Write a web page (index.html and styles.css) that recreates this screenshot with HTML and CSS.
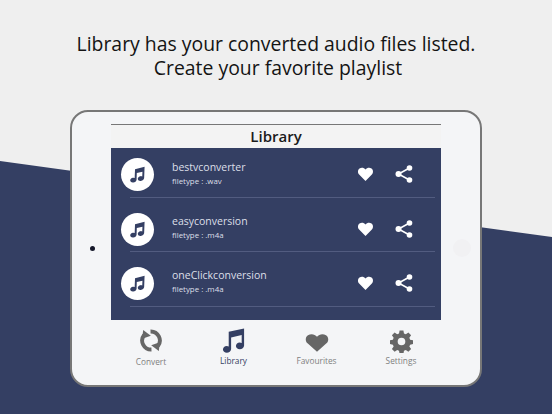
FILE: index.html
```html
<!DOCTYPE html>
<html lang="en">
<head>
<meta charset="utf-8">
<title>Library</title>
<link rel="stylesheet" href="styles.css">
</head>
<body>
<svg width="0" height="0" class="defs" aria-hidden="true">
  <symbol id="note" viewBox="0 0 24 24"><path d="M22 1 8.500 4.500 8 17a4 4 0 0 0-2.400-.5C3.300 16.700 1.500 18.500 1.700 20.500S3.900 23.500 6.100 23.200 10.500 21.500 10.700 19.300L11 10l8-2-.3 6.800a4 4 0 0 0-2.400-.5c-2.300.2-4.100 2-3.900 4s2.200 3 4.400 2.700 4.400-1.800 4.600-4z"/></symbol>
  <symbol id="heart" viewBox="0 0 24 24"><path d="M12 22.500 2.800 13.200C-.2 10.200.300 5.800 3 3.700c2.800-2.100 6.800-1.500 9 1.600 2.200-3.100 6.200-3.700 9-1.600 2.700 2.100 3.200 6.500.2 9.500z"/></symbol>
  <symbol id="share" viewBox="0 0 18 18"><path class="share-line" d="M14.500 3 3.500 9l11 6"/><circle cx="14.500" cy="3" r="2.800"/><circle cx="3.500" cy="9" r="3"/><circle cx="14.500" cy="15" r="2.800"/></symbol>
</svg>
<main class="page">
  <h1 class="headline">Library has your converted audio files listed.<br><span class="headline-second">Create your favorite playlist</span></h1>
  <section class="tablet">
    <span class="camera"></span>
    <span class="home"></span>
    <div class="screen">
      <h2 class="title">Library</h2>
      <ul class="list">
        <li class="row">
          <span class="disc"><svg class="disc-icon"><use href="#note"/></svg></span>
          <div class="meta"><span class="name">bestvconverter</span><span class="type">filetype : .wav</span></div>
          <svg class="like"><use href="#heart"/></svg>
          <svg class="share"><use href="#share"/></svg>
        </li>
        <li class="row">
          <span class="disc"><svg class="disc-icon"><use href="#note"/></svg></span>
          <div class="meta"><span class="name">easyconversion</span><span class="type">filetype : .m4a</span></div>
          <svg class="like"><use href="#heart"/></svg>
          <svg class="share"><use href="#share"/></svg>
        </li>
        <li class="row">
          <span class="disc"><svg class="disc-icon"><use href="#note"/></svg></span>
          <div class="meta"><span class="name">oneClickconversion</span><span class="type">filetype : .m4a</span></div>
          <svg class="like"><use href="#heart"/></svg>
          <svg class="share"><use href="#share"/></svg>
        </li>
      </ul>
      <nav class="tabs">
        <a class="tab tab-convert">
          <svg class="tab-icon" viewBox="0 0 26 26">
            <g><path class="arc" d="M13.500 22.800A9.800 9.800 0 0 1 5.500 7"/><path d="M4.500 1.500 12.800 7.800 3.500 11z"/></g>
            <g transform="rotate(180 13 13)"><path class="arc" d="M13.500 22.800A9.800 9.800 0 0 1 5.500 7"/><path d="M4.500 1.500 12.800 7.800 3.500 11z"/></g>
          </svg>
          <span>Convert</span>
        </a>
        <a class="tab tab-active">
          <svg class="tab-icon" viewBox="0 0 24 26"><path d="M22.500.500 6.500 4v15.200a5 5 0 0 0-2-.4C2.200 18.800.500 20.500.500 22.400S2.300 25.800 4.500 25.800s4.500-1.500 4.500-4V9.800l11-2.400v8.200a5 5 0 0 0-2-.4c-2.300 0-4 1.700-4 3.600s1.800 3.400 4 3.400 4.500-1.500 4.500-4z"/></svg>
          <span>Library</span>
        </a>
        <a class="tab">
          <svg class="tab-heart" viewBox="0 0 24 24" preserveAspectRatio="none"><path d="M12 22.500 2.800 13.200C-.2 10.200.300 5.800 3 3.700c2.800-2.100 6.800-1.500 9 1.600 2.200-3.100 6.200-3.700 9-1.600 2.700 2.100 3.200 6.500.2 9.500z"/></svg>
          <span>Favourites</span>
        </a>
        <a class="tab">
          <svg class="tab-gear" viewBox="0 0 24 24"><path fill-rule="evenodd" d="M10 .500h4l.6 3.200 1.900.8 2.700-1.800 2.800 2.800-1.800 2.700.8 1.900 3.200.6v4l-3.200.6-.8 1.900 1.800 2.700-2.800 2.800-2.700-1.800-1.900.8-.6 3.200h-4l-.6-3.200-1.900-.8-2.700 1.800-2.800-2.800 1.800-2.700-.8-1.900-3.200-.6v-4l3.200-.6.8-1.900-1.800-2.700 2.800-2.800 2.700 1.800 1.900-.8zM12 8a4 4 0 1 0 0 8 4 4 0 0 0 0-8z"/></svg>
          <span>Settings</span>
        </a>
      </nav>
    </div>
  </section>
</main>
</body>
</html>
```
FILE: styles.css
```css
* { box-sizing: border-box; }
html, body { margin: 0; height: 100%; }
body {
  width: 552px;
  height: 414px;
  overflow: hidden;
  background: #efefef;
  position: relative;
  font-family: "Open Sans", "Liberation Sans", sans-serif;
}
body::before {
  content: "";
  position: absolute;
  inset: 0;
  background: #343f63;
  clip-path: polygon(0 161px, 552px 237px, 552px 414px, 0 414px);
}
.defs { position: absolute; }
.page {
  position: relative;
  display: flex;
  flex-direction: column;
  align-items: center;
  padding-top: 32px;
}
.headline {
  margin: 0;
  height: 78px;
  font-weight: 400;
  font-size: 19.400px;
  line-height: 24px;
  text-align: center;
  color: #141414;
}
.headline-second { margin-left: 4px; }
.tablet {
  position: relative;
  width: 412px;
  height: 277px;
  padding: 12px 39px 0;
  background: #f4f5f7;
  border: 2px solid #777;
  border-radius: 18px;
}
.camera {
  position: absolute;
  left: 18px;
  top: 134px;
  width: 5px;
  height: 5px;
  border-radius: 50%;
  background: #15182a;
}
.home {
  position: absolute;
  right: 9px;
  top: 127px;
  width: 18px;
  height: 18px;
  border-radius: 50%;
  background: #f1f1f3;
}
.screen { display: flex; flex-direction: column; width: 330px; }
.title {
  margin: 0;
  height: 24px;
  border-top: 1px solid #777;
  background: #f3f3f3;
  font-weight: 600;
  font-size: 15px;
  line-height: 22px;
  text-align: center;
  color: #1b1b1b;
}
.list {
  list-style: none;
  margin: 0;
  padding: 0 6px 13.500px 0;
  background: #343f63;
}
.row {
  display: flex;
  align-items: flex-start;
  height: 54.500px;
  margin-left: 19px;
  padding-top: 15px;
  border-bottom: 1px solid #525c80;
}
.row:first-child { height: 49.500px; padding-top: 9.500px; }
.disc {
  display: flex;
  align-items: center;
  justify-content: center;
  width: 33px;
  height: 33px;
  margin-left: -9px;
  border-radius: 50%;
  background: #fff;
}
.disc-icon { width: 17px; height: 17px; fill: #343f63; }
.meta { display: flex; flex-direction: column; margin: 0 0 0 18px; flex: 1; color: #dcdfe8; }
.row:first-child .meta { margin-top: 1.500px; }
.name { font-size: 10.500px; line-height: 16px; }
.type { font-size: 7.900px; line-height: 12px; }
.like { width: 17px; height: 16px; fill: #fff; margin: 8px 21px 0 0; }
.share { width: 18px; height: 18px; fill: #fff; margin: 7px 22px 0 0; }
.share-line { fill: none; stroke: #fff; stroke-width: 1.600; }
.tabs { display: grid; grid-template-columns: 80px 85px 81px 88px; height: 50px; padding-top: 8px; }
.tab {
  display: flex;
  flex-direction: column;
  align-items: center;
  gap: 2px;
  color: #808080;
  fill: #666;
  font-size: 8.300px;
  line-height: 12px;
}
.tab-convert { gap: 3px; }
.tab-active { color: #343f63; fill: #343f63; }
.tab-icon { width: 24px; height: 25px; }
.tab-heart { width: 24px; height: 21px; margin-top: 4px; }
.tab-gear { width: 23px; height: 23px; margin-top: 2px; }
.arc { fill: none; stroke: #666; stroke-width: 4.200; }
```
